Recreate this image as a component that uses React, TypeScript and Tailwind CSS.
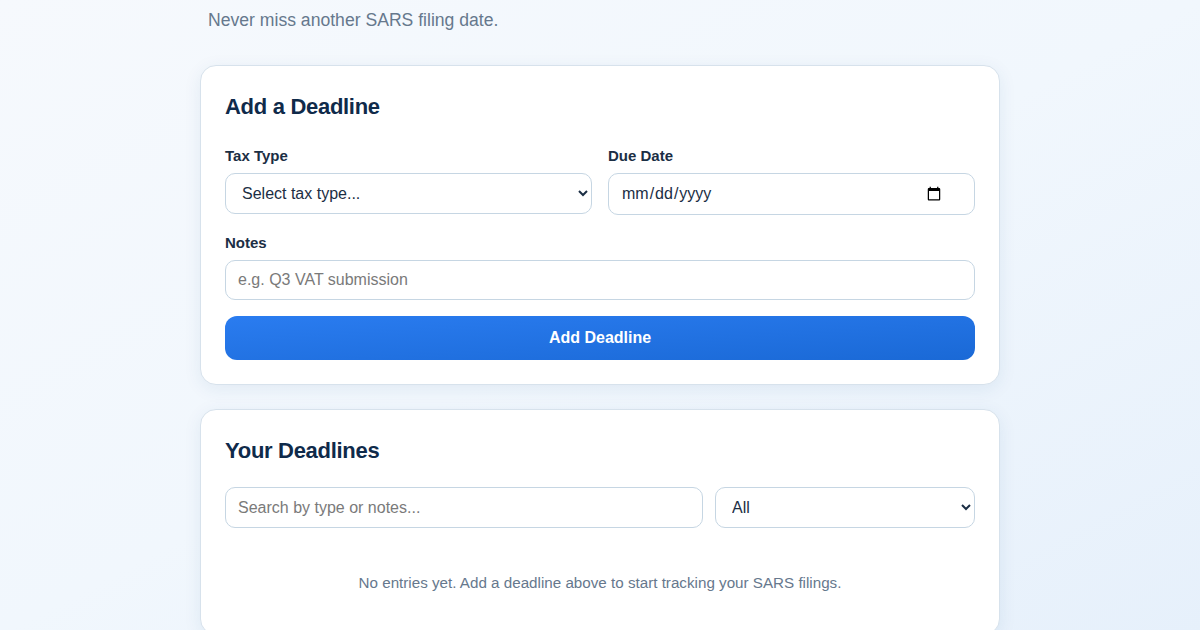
import React from "react";

const font = { fontFamily: '"Liberation Sans", Arial, sans-serif' };

export default function App() {
  return (
    <div
      className="min-h-screen w-full bg-gradient-to-br from-[#f6f9fd] via-[#f1f7fd] to-[#e6f0fb] text-[#0f2a47]"
      style={font}
    >
      <div className="mx-auto w-[800px]">
        <p className="px-2 pt-[8px] text-[17.6px] leading-[24px] text-[#66788d]">
          Never miss another SARS filing date.
        </p>

        <section className="mt-[33px] rounded-2xl border border-[#d7e2ec] bg-white px-6 pb-6 pt-[25px] shadow-[0_4px_18px_rgba(30,80,130,0.08)]">
          <h2 className="text-[22px] font-bold leading-[32px] tracking-[-0.3px] text-[#0f2a4a]">
            Add a Deadline
          </h2>
          <div className="mt-[23px] grid grid-cols-2 gap-4">
            <div>
              <label className="block text-[15px] font-bold leading-[20px] text-[#1b2e44]">
                Tax Type
              </label>
              <select className="mt-[7px] h-[41px] w-full rounded-[10px] border border-[#c6d6e3] bg-white px-3 text-[16px] text-[#1b2e44] outline-none">
                <option>Select tax type...</option>
              </select>
            </div>
            <div>
              <label className="block text-[15px] font-bold leading-[20px] text-[#1b2e44]">
                Due Date
              </label>
              <input
                type="date"
                className="mt-[7px] h-[42px] w-full rounded-[10px] border border-[#c6d6e3] bg-white pl-3 pr-[30px] text-[16px] text-[#1b2e44] outline-none"
              />
            </div>
          </div>
          <label className="mt-[18px] block text-[15px] font-bold leading-[20px] text-[#1b2e44]">
            Notes
          </label>
          <input
            placeholder="e.g. Q3 VAT submission"
            className="mt-[7px] h-[40px] w-full rounded-[10px] border border-[#c6d6e3] bg-white px-3 text-[16px] text-[#1b2e44] outline-none placeholder:text-[#7a7a7a]"
          />
          <button
            type="button"
            className="mt-4 h-[44px] w-full rounded-xl bg-gradient-to-br from-[#2a7cf0] to-[#1a69d6] text-[16px] font-bold text-white"
          >
            Add Deadline
          </button>
        </section>

        <section className="mt-[24px] rounded-2xl border border-[#d7e2ec] bg-white px-6 pb-10 pt-[25px] shadow-[0_4px_18px_rgba(30,80,130,0.08)]">
          <h2 className="text-[22px] font-bold leading-[32px] tracking-[-0.3px] text-[#0f2a4a]">
            Your Deadlines
          </h2>
          <div className="mt-[20px] flex gap-3">
            <input
              placeholder="Search by type or notes..."
              className="h-[41px] flex-1 rounded-[10px] border border-[#c6d6e3] bg-white px-3 text-[16px] text-[#1b2e44] outline-none placeholder:text-[#7a7a7a]"
            />
            <select className="h-[41px] w-[260px] rounded-[10px] border border-[#c6d6e3] bg-white px-3 text-[16px] text-[#1b2e44] outline-none">
              <option>All</option>
            </select>
          </div>
          <p className="pt-[44px] text-center text-[15.2px] leading-[22px] text-[#66788d]">
            No entries yet. Add a deadline above to start tracking your SARS filings.
          </p>
        </section>
      </div>
    </div>
  );
}
